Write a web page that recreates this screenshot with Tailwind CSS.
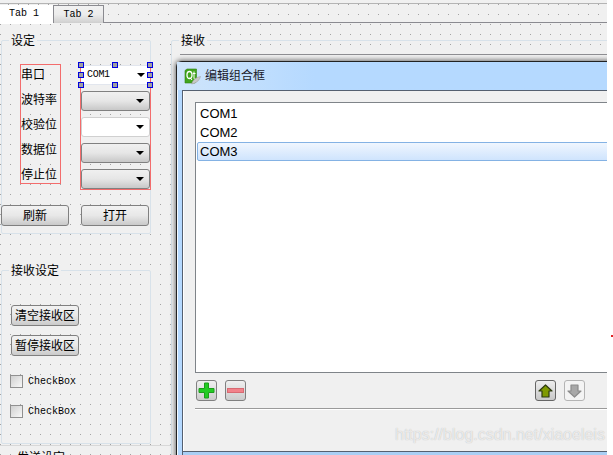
<!DOCTYPE html>
<html lang="en">
<head>
  <meta charset="UTF-8" />
  <title>Designer</title>
  <script src="https://cdn.jsdelivr.net/npm/@tailwindcss/browser@4"></script>
</head>
<body class="bg-white overflow-hidden">
  <div class="relative w-[613px] h-[455px] overflow-hidden bg-[#f0f0f0] text-black text-[12px] leading-none font-['Liberation_Sans','Noto_Sans_CJK_SC',sans-serif]">

    <!-- form grid dots -->
    <svg class="absolute left-0 top-0" width="613" height="455">
      <defs>
        <pattern id="dots-top" width="10" height="10" patternUnits="userSpaceOnUse" x="8" y="4"><rect width="1" height="1" fill="#a3a3a3"/></pattern>
        <pattern id="dots" width="10" height="10" patternUnits="userSpaceOnUse" x="0" y="4"><rect width="1" height="1" fill="#a3a3a3"/></pattern>
      </defs>
      <rect x="0" y="0" width="613" height="22" fill="url(#dots-top)"/>
      <rect x="0" y="23" width="613" height="432" fill="url(#dots)"/>
    </svg>

    <!-- tabs -->
    <div class="absolute left-0 top-[3px] w-full h-px bg-[#b4b4b4]"></div>
    <div class="absolute left-0 top-[22px] w-full h-px bg-[#8a8a90]"></div>
    <div class="absolute left-0 top-[5px] flex items-start font-['Liberation_Mono',monospace] text-[10px]">
      <div class="w-[53px] h-[19px] bg-white flex items-center pl-[9px] pb-[2px]">Tab 1</div>
      <div class="w-[51px] h-[18px] border-x border-t border-[#8a8a90] bg-gradient-to-b from-[#f2f2f2] via-[#ececec] to-[#cfcfcf] flex items-center justify-center">Tab 2</div>
    </div>

    <!-- group: settings -->
    <div class="absolute left-[1px] top-[40px] w-[150px] h-[194px] border border-[#d8e2ea] rounded-[2px]"></div>
    <div class="absolute left-[9px] top-[34px] px-[2px] h-[13px] bg-[#f0f0f0] flex items-center">设定</div>

    <div class="absolute left-[20px] top-[64px] w-[41px] h-[120px] border border-[#f36c6c] flex flex-col gap-[9px] pt-[2px]">
      <span class="h-[16px] flex items-center">串口</span>
      <span class="h-[16px] flex items-center">波特率</span>
      <span class="h-[16px] flex items-center">校验位</span>
      <span class="h-[16px] flex items-center">数据位</span>
      <span class="h-[16px] flex items-center">停止位</span>
    </div>

    <div class="absolute left-[80px] top-[65px] w-[71px] h-[125px] border border-[#f36c6c]"></div>
    <div class="absolute left-[81px] top-[65px] w-[69px] flex flex-col gap-[6px]">
      <div class="h-[20px] bg-white border-y border-[#e2e6ee] flex items-center justify-between pl-[6px] pr-[5px] font-['Liberation_Mono',monospace] text-[10px] tracking-[-0.3px]">
        COM1<span class="w-0 h-0 border-x-[4px] border-x-transparent border-t-[4px] border-t-black"></span>
      </div>
      <div class="h-[20px] rounded-[3px] border border-[#808080] bg-gradient-to-b from-[#f0f0f0] via-[#e6e6e6] to-[#c8c8c8] flex items-center justify-end pr-[5px]"><span class="w-0 h-0 border-x-[4px] border-x-transparent border-t-[4px] border-t-black"></span></div>
      <div class="h-[20px] rounded-[3px] border border-[#d0d0d0] bg-white flex items-center justify-end pr-[5px]"><span class="w-0 h-0 border-x-[4px] border-x-transparent border-t-[4px] border-t-black"></span></div>
      <div class="h-[20px] rounded-[3px] border border-[#808080] bg-gradient-to-b from-[#f0f0f0] via-[#e6e6e6] to-[#c8c8c8] flex items-center justify-end pr-[5px]"><span class="w-0 h-0 border-x-[4px] border-x-transparent border-t-[4px] border-t-black"></span></div>
      <div class="h-[20px] rounded-[3px] border border-[#808080] bg-gradient-to-b from-[#f0f0f0] via-[#e6e6e6] to-[#c8c8c8] flex items-center justify-end pr-[5px]"><span class="w-0 h-0 border-x-[4px] border-x-transparent border-t-[4px] border-t-black"></span></div>
    </div>

    <!-- selection handles -->
    <div class="absolute left-[78px] top-[62px] w-[6px] h-[6px] bg-[#a0a0a0] border border-[#0000e0]"></div>
    <div class="absolute left-[112px] top-[62px] w-[6px] h-[6px] bg-[#a0a0a0] border border-[#0000e0]"></div>
    <div class="absolute left-[147px] top-[62px] w-[6px] h-[6px] bg-[#a0a0a0] border border-[#0000e0]"></div>
    <div class="absolute left-[78px] top-[72px] w-[6px] h-[6px] bg-[#a0a0a0] border border-[#0000e0]"></div>
    <div class="absolute left-[147px] top-[72px] w-[6px] h-[6px] bg-[#a0a0a0] border border-[#0000e0]"></div>
    <div class="absolute left-[78px] top-[82px] w-[6px] h-[6px] bg-[#a0a0a0] border border-[#0000e0]"></div>
    <div class="absolute left-[112px] top-[82px] w-[6px] h-[6px] bg-[#a0a0a0] border border-[#0000e0]"></div>
    <div class="absolute left-[147px] top-[82px] w-[6px] h-[6px] bg-[#a0a0a0] border border-[#0000e0]"></div>

    <div class="absolute left-[1px] top-[205px] w-[68px] h-[21px] rounded-[3px] border border-[#808080] bg-gradient-to-b from-[#f2f2f2] via-[#e8e8e8] to-[#cacaca] flex items-center justify-center">刷新</div>
    <div class="absolute left-[81px] top-[205px] w-[68px] h-[21px] rounded-[3px] border border-[#808080] bg-gradient-to-b from-[#f2f2f2] via-[#e8e8e8] to-[#cacaca] flex items-center justify-center">打开</div>

    <!-- group: receive settings -->
    <div class="absolute left-[1px] top-[270px] w-[150px] h-[174px] border border-[#d8e2ea] rounded-[2px]"></div>
    <div class="absolute left-[9px] top-[264px] px-[2px] h-[13px] bg-[#f0f0f0] flex items-center">接收设定</div>
    <div class="absolute left-[11px] top-[305px] flex flex-col gap-[9px]">
      <div class="w-[68px] h-[21px] rounded-[3px] border border-[#808080] bg-gradient-to-b from-[#f2f2f2] via-[#e8e8e8] to-[#cacaca] flex items-center justify-center">清空接收区</div>
      <div class="w-[68px] h-[21px] rounded-[3px] border border-[#808080] bg-gradient-to-b from-[#f2f2f2] via-[#e8e8e8] to-[#cacaca] flex items-center justify-center">暂停接收区</div>
    </div>
    <div class="absolute left-[10px] top-[375px] flex flex-col gap-[17px] font-['Liberation_Mono',monospace] text-[10px]">
      <div class="h-[13px] flex items-center gap-[5px]"><span class="w-[13px] h-[13px] border border-[#909090] bg-gradient-to-br from-[#d0d0d0] to-[#f8f8f8]"></span><span class="pt-[1px]">CheckBox</span></div>
      <div class="h-[13px] flex items-center gap-[5px]"><span class="w-[13px] h-[13px] border border-[#909090] bg-gradient-to-br from-[#d0d0d0] to-[#f8f8f8]"></span><span class="pt-[1px]">CheckBox</span></div>
    </div>
    <div class="absolute left-0 top-[445px] w-[171px] h-px bg-[#d8d8d8]"></div>
    <div class="absolute left-[15px] top-[452px] px-[2px] bg-[#f0f0f0]">发送设定</div>

    <!-- group: receive, mostly behind the dialog -->
    <div class="absolute left-[171px] top-[40px] w-[460px] h-[440px] border border-[#d8e2ea] rounded-[2px]"></div>
    <div class="absolute left-[179px] top-[34px] px-[2px] h-[13px] bg-[#f0f0f0] flex items-center">接收</div>
    <div class="absolute left-[180px] top-[54px] w-[433px] h-px bg-[#8e8e92]"></div>

    <!-- dialog -->
    <div class="absolute left-[176px] top-[61px] w-[460px] h-[400px] flex flex-col rounded-tl-[6px] border border-[#222] bg-[#b5d9ff] shadow-[inset_1px_1px_0_#f4faff,-1px_-1px_5px_rgba(0,0,0,0.55)]">
      <div class="h-[28px] shrink-0 pl-[7px] flex items-center gap-[4px] bg-gradient-to-r from-[#cfe5fb] to-[#b5d9ff] to-[30%] text-[#1a1a2a]">
        <svg width="17" height="17" viewBox="0 0 17 17">
          <path d="M1 2.500 3 1h9.500v12.500L10.500 15H1z" fill="#41a51c" stroke="#2f7f12" stroke-width=".6"/>
          <path d="M5.500 3.500c-1.700 0-2.500 1.500-2.500 3.500s.8 3.500 2.500 3.500S8 9 8 7 7.200 3.500 5.500 3.500z" fill="none" stroke="#fff" stroke-width="1.300"/>
          <path d="M6 9.500l2 2.500M10 3.500v6.500c0 .8.500 1 1.500 1M8.800 5.500h2.700" fill="none" stroke="#fff" stroke-width="1"/>
          <path d="M7.500 16c1-3.500 4-6.500 9-7.500-1 3-3 6.500-9 7.500z" fill="#c8c8c8" stroke="#9a9a9a" stroke-width=".5"/>
        </svg>
        <span>编辑组合框</span>
      </div>
      <div class="ml-[5px] flex-1 border-t border-l border-[#556070] bg-[#f0f0f0] shadow-[inset_1px_0_0_#fff] pl-[12px] pt-[11px] flex flex-col">
        <div class="h-[271px] shrink-0 border border-[#7f8489] bg-white text-[13px] pt-px px-px">
          <div class="h-[19px] pl-[3px] flex items-center">COM1</div>
          <div class="h-[19px] pl-[3px] flex items-center">COM2</div>
          <div class="h-[19px] pl-[2px] flex items-center rounded-[2px] border border-[#84b2e4] bg-gradient-to-b from-[#f0f6fe] to-[#cfe4fd]">COM3</div>
        </div>
        <div class="h-[35px] shrink-0 flex items-start pl-px pt-[7px] w-[390px]">
          <div class="w-[21px] h-[21px] rounded-[3px] border border-[#808080] bg-gradient-to-b from-[#f0f0f0] to-[#cccccc] flex items-center justify-center">
            <svg width="17" height="17" viewBox="0 0 17 17"><path d="M6.500 1h4v5.500H16v4h-5.500V16h-4v-5.500H1v-4h5.500z" fill="#22cc22" stroke="#1c9c1c"/></svg>
          </div>
          <div class="ml-[8px] w-[21px] h-[21px] rounded-[3px] border border-[#808080] bg-gradient-to-b from-[#f0f0f0] to-[#cccccc] flex items-center justify-center">
            <svg width="17" height="5" viewBox="0 0 17 5"><rect x=".5" y=".5" width="16" height="4" fill="#f2828a" stroke="#d86a72"/></svg>
          </div>
          <div class="ml-auto w-[21px] h-[21px] rounded-[3px] border border-[#666] bg-gradient-to-b from-[#eeeeee] to-[#c8c8c8] flex items-center justify-center">
            <svg width="15" height="14" viewBox="0 0 15 14"><path d="M7.500 1 14 7h-3v6H4V7H1z" fill="#7f9a00" stroke="#2d3a10" stroke-width="1.200" stroke-linejoin="round"/></svg>
          </div>
          <div class="ml-[8px] w-[21px] h-[21px] rounded-[3px] border border-[#b4b4b4] bg-[#f4f4f4] flex items-center justify-center">
            <svg width="15" height="14" viewBox="0 0 15 14"><path d="M4 1h7v6h3l-6.500 6L1 7h3z" fill="#a8a8a8" stroke="#8c8c8c" stroke-width="1.200" stroke-linejoin="round"/></svg>
          </div>
        </div>
        <div class="h-px bg-[#9a9a9a] shadow-[0_1px_0_#fff]"></div>
      </div>
    </div>
    <div class="absolute left-[183px] top-[451px] w-[430px] h-px bg-[#556070]"></div>
    <div class="absolute left-[183px] top-[452px] w-[430px] h-[3px] bg-[#a9cff5]"></div>

    <!-- watermark -->
    <div class="absolute left-[395px] top-[426px] text-[16px] leading-[18px] text-white/70 [text-shadow:0_0_1px_#b0b0b0]">https://blog.csdn.net/xiaoeleis</div>

    <!-- blank strip down the right edge, with a stray red mark -->
    <div class="absolute left-[607px] top-0 w-[6px] h-full bg-white"></div>
    <div class="absolute left-[611px] top-[335px] w-[2px] h-[2px] bg-[#e02020]"></div>
  </div>
</body>
</html>
